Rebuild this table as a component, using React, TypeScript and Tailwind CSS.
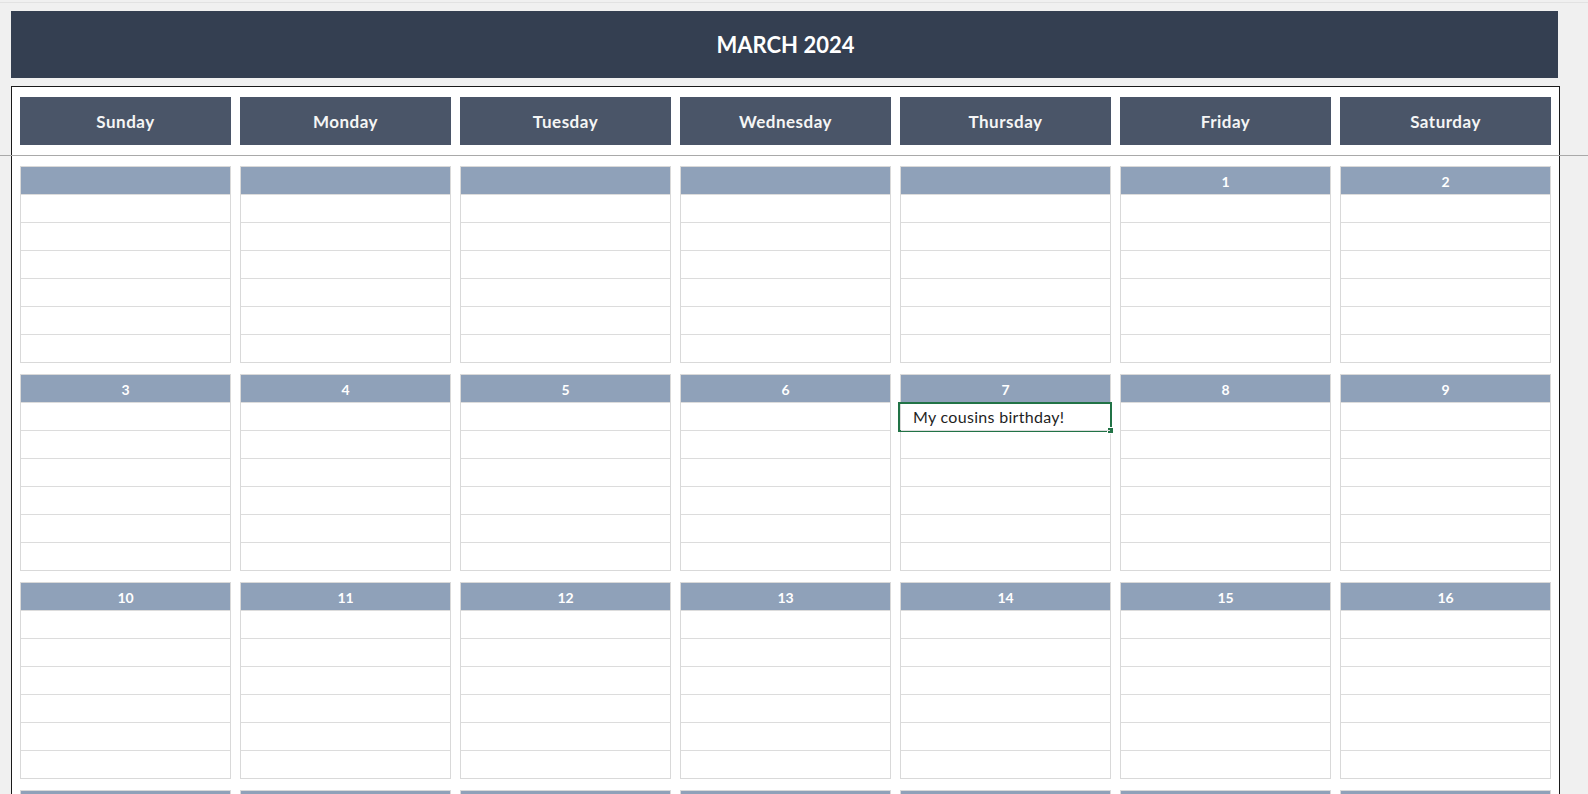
import React from 'react'

const days = ['Sunday', 'Monday', 'Tuesday', 'Wednesday', 'Thursday', 'Friday', 'Saturday']

// March 2024 starts on a Friday; the fourth week only peeks in at the bottom edge
const weeks: (number | null)[][] = [
  [null, null, null, null, null, 1, 2],
  [3, 4, 5, 6, 7, 8, 9],
  [10, 11, 12, 13, 14, 15, 16],
  [null, null, null, null, null, null, null],
]

const notes: Record<number, string> = {
  7: 'My cousins birthday!',
}

const DayCell: React.FC<{ day: number | null }> = ({ day }) => {
  const note = day ? notes[day] : undefined

  return (
    <div className="border border-[#d9d9d9] bg-white">
      <div className="h-[27px] pt-[2px] bg-[#8fa1b9] flex items-center justify-center text-[14px] font-bold text-white">
        {day ?? ''}
      </div>
      {[0, 1, 2, 3, 4, 5].map((row) => (
        <div key={row} className="relative h-[28px] border-t border-[#dcdcdc] first:border-t-0">
          {row === 0 && note && (
            <>
              <div className="absolute -left-[3px] -right-[2px] -top-[1px] -bottom-[2px] border-2 border-[#217346]" />
              <div className="absolute -right-[4px] -bottom-[4px] w-[5px] h-[5px] bg-[#217346] border border-white box-content" />
              <div className="h-full flex items-center pl-[12px] pt-[1px] text-[16px] tracking-[0.3px] text-[#1f1f1f]">{note}</div>
            </>
          )}
        </div>
      ))}
    </div>
  )
}

export default function App() {
  return (
    <div className="relative w-[1588px] h-[794px] overflow-hidden bg-[#f0f0f0] font-['Lato',sans-serif]">
      {/* top strip */}
      <div className="h-[2px]" />
      <div className="h-px bg-[#e2e2e2]" />

      {/* Title */}
      <div className="ml-[11px] mt-[8px] w-[1547px] h-[67px] bg-[#343f51] flex items-center justify-center">
        <h1 className="text-[22px] font-bold text-white pl-[2px]">MARCH 2024</h1>
      </div>

      {/* Calendar frame */}
      <div className="ml-[11px] mt-[8px] w-[1549px] h-[800px] border border-[#1a1a1a] bg-white pl-[8px] pr-[8px] pt-[10px]">
        <div className="grid grid-cols-7 gap-x-[9px]">
          {days.map((d) => (
            <div
              key={d}
              className="h-[48px] pt-[2px] bg-[#4a5568] flex items-center justify-center text-[17px] font-bold text-[#f5f5f5] tracking-[0.5px]"
            >
              {d}
            </div>
          ))}
        </div>

        <div className="mt-[21px] flex flex-col gap-[11px]">
          {weeks.map((week, wi) => (
            <div key={wi} className="grid grid-cols-7 gap-x-[9px]">
              {week.map((day, di) => (
                <DayCell key={di} day={day} />
              ))}
            </div>
          ))}
        </div>
      </div>

      {/* frozen pane divider */}
      <div className="absolute left-0 right-0 top-[155px] h-px bg-[#a9a9a9]" />
    </div>
  )
}
